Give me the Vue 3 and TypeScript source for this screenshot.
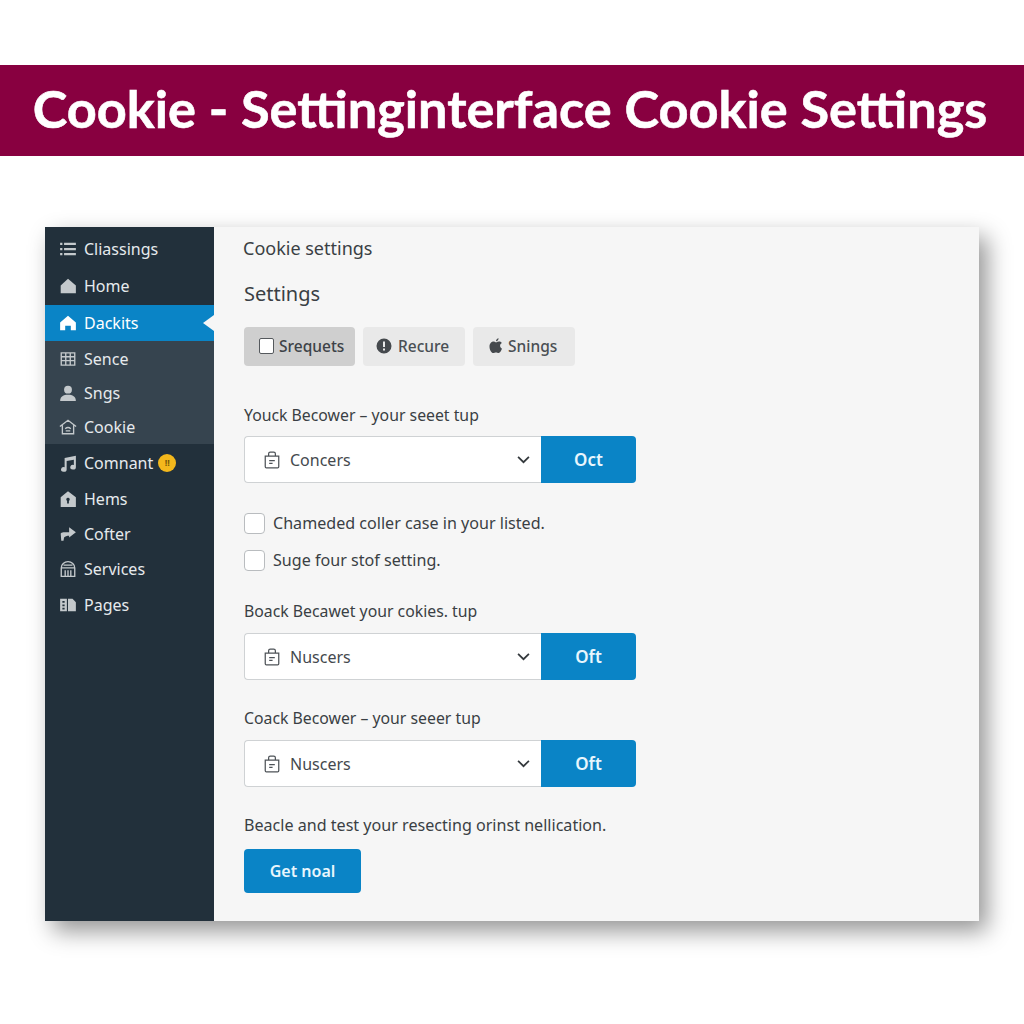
<script setup lang="ts">
interface NavItem {
  label: string
  icon: string
}

const topItems: NavItem[] = [
  { label: 'Cliassings', icon: 'list' },
  { label: 'Home', icon: 'home' },
]
const groupItems: NavItem[] = [
  { label: 'Sence', icon: 'grid' },
  { label: 'Sngs', icon: 'user' },
  { label: 'Cookie', icon: 'outline' },
]
const lowerItems: NavItem[] = [
  { label: 'Comnant', icon: 'music' },
  { label: 'Hems', icon: 'lock' },
  { label: 'Cofter', icon: 'share' },
  { label: 'Services', icon: 'bank' },
  { label: 'Pages', icon: 'book' },
]
</script>

<template>
  <div class="page">
    <header class="banner">Cookie - Settinginterface Cookie Settings</header>

    <div class="window">
      <aside class="sidebar">
        <a v-for="item in topItems" :key="item.label" class="nav top">
          <svg v-if="item.icon === 'list'" class="ico" viewBox="0 0 16 16">
            <path d="M1 2.500h2v2H1zM1 7h2v2H1zM1 11.500h2v2H1zM4.500 2.500H15v2H4.500zM4.500 7H15v2H4.500zM4.500 11.500H15v2H4.500z" />
          </svg>
          <svg v-else class="ico" viewBox="0 0 16 16">
            <path d="M8 1.500 15 7.500v7H1.500v-7z" />
          </svg>
          {{ item.label }}
        </a>

        <a class="nav active">
          <svg class="ico white" viewBox="0 0 16 16">
            <path d="M8 1.500 15 7.500v7h-4.500v-4h-5v4H1v-7z" />
          </svg>
          Dackits
        </a>

        <div class="group">
          <a v-for="item in groupItems" :key="item.label" class="nav short">
            <svg v-if="item.icon === 'grid'" class="ico" viewBox="0 0 16 16">
              <path class="line" d="M2 2.500h12v11H2zM2 6h12M2 9.500h12M6 2.500v11M10 2.500v11" />
            </svg>
            <svg v-else-if="item.icon === 'user'" class="ico" viewBox="0 0 16 16">
              <circle cx="8" cy="5" r="3.500" />
              <path d="M1 15c0-4 3-5.500 7-5.500s7 1.500 7 5.500z" />
            </svg>
            <svg v-else class="ico" viewBox="0 0 16 16">
              <path class="line" d="M.8 7.500 8 2l7.200 5.500M3 6.500V14h10V6.500M5.500 9.500c1.500-1.300 3.500-1.300 5 0M6 11.500h4" />
            </svg>
            {{ item.label }}
          </a>
        </div>

        <div class="lower">
          <a v-for="item in lowerItems" :key="item.label" class="nav" :class="{ tight: item.label === 'Cofter' }">
            <svg v-if="item.icon === 'music'" class="ico" viewBox="0 0 16 16">
              <path d="M5 3.500 15 1.500v10.200a2.500 2 0 1 1-1.800-1.900V5L6.800 6.300v7.400A2.500 2 0 1 1 5 11.800z" />
            </svg>
            <svg v-else-if="item.icon === 'lock'" class="ico" viewBox="0 0 16 16">
              <path fill-rule="evenodd" d="M8 1 15 6.500V15H1.500V6.500zM8 7a1.500 1.500 0 0 0-.8 2.800V12h1.600V9.800A1.500 1.500 0 0 0 8 7z" />
            </svg>
            <svg v-else-if="item.icon === 'share'" class="ico" viewBox="0 0 16 16">
              <path d="M9 2l6 4.500-6 4.500V9.500c-2 0-3.500.500-4.500 1.500L4 14H2l-.5-6.500c1-.7 2-1 3.500-1h4z" />
            </svg>
            <svg v-else-if="item.icon === 'bank'" class="ico" viewBox="0 0 16 16">
              <path class="line" d="M2 7a6 5.500 0 0 1 12 0zM2 7v7.500h12V7M5.500 9v5.500M8 9v5.500M10.500 9v5.500M4 4.500h8" />
            </svg>
            <svg v-else class="ico" viewBox="0 0 16 16">
              <path fill-rule="evenodd" d="M1 2.500h6v11H1zM3 4.500v1.500h2V4.500zM3 7.500V9h2V7.500zM3 10.500V12h2v-1.500z" />
              <path d="M8 2.500h4l3 3v8H8z" />
            </svg>
            {{ item.label }}
            <span v-if="item.icon === 'music'" class="badge">!!</span>
          </a>
        </div>
      </aside>

      <main class="content">
        <h1>Cookie settings</h1>
        <h2>Settings</h2>

        <div class="tabs">
          <button class="tab selected">
            <span class="box"></span>
            Srequets
          </button>
          <button class="tab">
            <svg class="tab-ico" viewBox="0 0 16 16">
              <path fill-rule="evenodd" d="M8 .5a7.500 7.500 0 1 0 0 15 7.500 7.500 0 0 0 0-15zM7 3.500h2V9H7zM7 10.500h2v2H7z" />
            </svg>
            Recure
          </button>
          <button class="tab apple">
            <svg class="tab-ico" viewBox="0 0 16 16">
              <path d="M8 4.500c1-.6 2-.9 3-.9 1.200 0 2.100.5 2.800 1.400-1.300.8-1.800 1.800-1.700 3 .1 1.200.8 2.100 1.900 2.600-.6 1.800-1.900 4.400-3.400 4.400-.9 0-1.500-.6-2.600-.6s-1.800.6-2.700.6C3.300 15 1.500 11.500 1.500 8.700c0-3 1.900-5.100 4-5.100 1 0 1.800.5 2.500.9zM8 3.200C8 1.700 9.200.5 10.600.3c.1 1.600-1.100 2.800-2.600 2.900z" />
            </svg>
            Snings
          </button>
        </div>

        <p class="label first">Youck Becower – your seeet tup</p>
        <div class="field">
          <div class="select">
            <svg class="bag" viewBox="0 0 16 16">
              <path d="M2 4.500h12v9.500a1 1 0 0 1-1 1H3a1 1 0 0 1-1-1zM5 4.500V2.500a1.500 1.500 0 0 1 1.500-1.500h3A1.500 1.500 0 0 1 11 2.500v2M5.500 8.500h5M5.500 11h3" />
            </svg>
            <span>Concers</span>
            <svg class="chev" viewBox="0 0 12 8"><path d="M1 1.500 6 6.500 11 1.500" /></svg>
          </div>
          <button class="go">Oct</button>
        </div>

        <label class="check one"><span class="tick"></span>Chameded coller case in your listed.</label>
        <label class="check two"><span class="tick"></span>Suge four stof setting.</label>

        <p class="label second">Boack Becawet your cokies. tup</p>
        <div class="field low">
          <div class="select">
            <svg class="bag" viewBox="0 0 16 16">
              <path d="M2 4.500h12v9.500a1 1 0 0 1-1 1H3a1 1 0 0 1-1-1zM5 4.500V2.500a1.500 1.500 0 0 1 1.500-1.500h3A1.500 1.500 0 0 1 11 2.500v2M5.500 8.500h5M5.500 11h3" />
            </svg>
            <span>Nuscers</span>
            <svg class="chev" viewBox="0 0 12 8"><path d="M1 1.500 6 6.500 11 1.500" /></svg>
          </div>
          <button class="go">Oft</button>
        </div>

        <p class="label third">Coack Becower – your seeer tup</p>
        <div class="field low">
          <div class="select">
            <svg class="bag" viewBox="0 0 16 16">
              <path d="M2 4.500h12v9.500a1 1 0 0 1-1 1H3a1 1 0 0 1-1-1zM5 4.500V2.500a1.500 1.500 0 0 1 1.500-1.500h3A1.500 1.500 0 0 1 11 2.500v2M5.500 8.500h5M5.500 11h3" />
            </svg>
            <span>Nuscers</span>
            <svg class="chev" viewBox="0 0 12 8"><path d="M1 1.500 6 6.500 11 1.500" /></svg>
          </div>
          <button class="go">Oft</button>
        </div>

        <p class="label fourth">Beacle and test your resecting orinst nellication.</p>
        <button class="primary">Get noal</button>
      </main>
    </div>
  </div>
</template>

<style>
html,
body {
  margin: 0;
  background: #fff;
}
</style>

<style scoped>
.page {
  min-height: 1024px;
  padding-top: 65px;
  box-sizing: border-box;
}

.banner {
  height: 91px;
  padding-right: 4px;
  box-sizing: border-box;
  background: #880040;
  color: #fff;
  font: 700 52.300px/85px "Lato", sans-serif;
  -webkit-text-stroke: 0.6px #fff;
  text-align: center;
  white-space: nowrap;
}

.window {
  display: flex;
  width: 934px;
  height: 694px;
  margin: 71px 0 0 45px;
  font-family: "Noto Sans", sans-serif;
  box-shadow: 8px 10px 22px rgba(0, 0, 0, 0.42);
}

.sidebar {
  width: 169px;
  flex: none;
  padding-top: 4px;
  box-sizing: border-box;
  background: #22303b;
}

.nav {
  display: flex;
  align-items: center;
  height: 36px;
  padding-left: 14px;
  color: #e6eaed;
  font-size: 16px;
  position: relative;
}

.nav.top {
  height: 35px;
  padding-bottom: 2px;
}

.nav.tight {
  height: 34px;
}

.nav.short {
  height: 34px;
}

.active {
  height: 36px;
  background: #0a84c6;
  color: #fff;
}

.active::after {
  content: "";
  position: absolute;
  right: 0;
  top: 10px;
  border: 8px solid transparent;
  border-left: 0;
  border-right: 11px solid #f6f6f6;
}

.group {
  height: 102px;
  padding-top: 1px;
  background: #36444f;
}

.lower {
  padding-top: 1px;
}

.ico {
  width: 18px;
  height: 18px;
  margin-right: 7px;
  fill: #c4c9cc;
  flex: none;
}

.ico.white {
  fill: #fff;
}

.line {
  fill: none;
  stroke: #c4c9cc;
  stroke-width: 1.200;
}

.badge {
  width: 18px;
  height: 18px;
  margin-left: 5px;
  border-radius: 50%;
  background: #f4b81c;
  color: #7a5a08;
  font-size: 9px;
  font-weight: 700;
  line-height: 18px;
  text-align: center;
}

.content {
  flex: 1;
  padding: 0 0 0 30px;
  background: #f6f6f6;
  color: #3a3f44;
  font-size: 16px;
}

h1 {
  margin: 8px 0 0 -1px;
  font-size: 18px;
  font-weight: 400;
  line-height: 26px;
}

h2 {
  margin: 19px 0 0;
  font-size: 20px;
  font-weight: 400;
  line-height: 28px;
}

.tabs {
  display: flex;
  gap: 8px;
  margin-top: 19px;
}

.tab {
  display: flex;
  align-items: center;
  width: 102px;
  height: 39px;
  padding: 0 0 2px 13px;
  border: 0;
  border-radius: 4px;
  background: #e9e9e9;
  color: #4a4f54;
  font: 500 15.500px "Noto Sans", sans-serif;
}

.tab.apple {
  padding-left: 15px;
}

.tab.selected {
  width: 111px;
  padding-left: 15px;
  background: #cfcfcf;
  color: #3d4247;
}

.box {
  width: 15px;
  height: 16px;
  margin-right: 5px;
  box-sizing: border-box;
  border: 1px solid #55595d;
  border-radius: 2px;
  background: #fff;
}

.tab-ico {
  width: 16px;
  height: 16px;
  margin-right: 6px;
  fill: #45494d;
}

.tab.apple .tab-ico {
  margin-right: 4px;
}

.label {
  margin: 0;
  font-size: 15.800px;
  line-height: 22px;
  white-space: nowrap;
}

.first {
  margin-top: 38px;
}

.second {
  margin-top: 30px;
}

.third {
  margin-top: 27px;
}

.fourth {
  margin-top: 27px;
  font-size: 16.100px;
}

.field {
  display: flex;
  width: 392px;
  height: 47px;
  margin-top: 10px;
}

.field.low {
  margin-top: 11px;
}

.select {
  display: flex;
  flex: 1;
  align-items: center;
  padding: 0 9px 0 18px;
  border: 1px solid #cfd2d4;
  border-right: 0;
  border-radius: 4px 0 0 4px;
  background: #fff;
  color: #44494e;
  font-size: 16px;
}

.select span {
  flex: 1;
}

.bag {
  width: 18px;
  height: 18px;
  margin-right: 9px;
  fill: none;
  stroke: #4d5257;
  stroke-width: 1.100;
}

.chev {
  width: 13px;
  height: 9px;
  margin-right: 2px;
  fill: none;
  stroke: #33383c;
  stroke-width: 1.600;
}

.go {
  width: 95px;
  border: 0;
  border-radius: 0 4px 4px 0;
  background: #0a84c6;
  color: #e8f6fd;
  font: 600 17px "Noto Sans", sans-serif;
}

.check {
  display: flex;
  align-items: center;
  height: 20px;
  font-size: 16.100px;
  white-space: nowrap;
}

.check.one {
  margin-top: 30px;
}

.check.two {
  margin-top: 17px;
}

.tick {
  width: 19px;
  height: 19px;
  margin-right: 8px;
  border: 1px solid #b9bcbf;
  border-radius: 4px;
  background: #fff;
  flex: none;
}

.primary {
  display: block;
  width: 117px;
  height: 44px;
  margin-top: 13px;
  border: 0;
  border-radius: 4px;
  background: #0a84c6;
  color: #e8f6fd;
  font: 600 16px "Noto Sans", sans-serif;
}
</style>
